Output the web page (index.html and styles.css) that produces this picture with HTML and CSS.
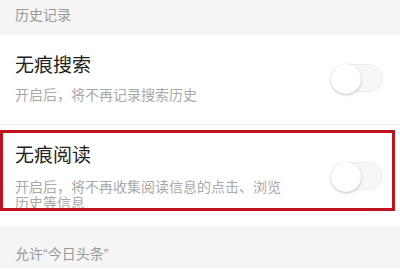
FILE: index.html
```html
<!DOCTYPE html>
<html lang="zh-CN">
<head>
    <meta charset="UTF-8">
    <meta name="viewport" content="width=device-width, initial-scale=1.0">
    <title>历史记录</title>
    <link rel="stylesheet" href="styles.css">
</head>
<body>
    <div class="section-head">历史记录</div>

    <div class="list">
        <div class="row">
            <div class="row-text">
                <div class="row-title">无痕搜索</div>
                <div class="row-desc">开启后，将不再记录搜索历史</div>
            </div>
            <div class="switch"><span class="knob"></span></div>
        </div>

        <div class="row row-last">
            <div class="row-text">
                <div class="row-title">无痕阅读</div>
                <div class="row-desc">开启后，将不再收集阅读信息的点击、浏览历史等信息</div>
            </div>
            <div class="switch"><span class="knob"></span></div>
            <div class="highlight"></div>
        </div>
    </div>

    <div class="section-foot">允许“今日头条”</div>
</body>
</html>
```

FILE: styles.css
```css
* {
    margin: 0;
    padding: 0;
    box-sizing: border-box;
}

body {
    width: 400px;
    background: #fff;
    font-family: "Noto Sans CJK SC", "Noto Sans", sans-serif;
    overflow: hidden;
}

.section-head {
    height: 35px;
    padding: 4px 15px 0;
    background: #f5f5f5;
    color: #9a9a9a;
    font-size: 14px;
    line-height: 20px;
}

.list {
    background: #fff;
}

.row {
    position: relative;
    display: flex;
    align-items: center;
    gap: 40px;
    padding: 16px 17px 20px 15px;
    border-bottom: 1px solid #f0f0f0;
}

.row-last {
    padding-top: 16px;
    padding-bottom: 16px;
    border-bottom: none;
}

.row-text {
    flex: 1;
}

.row-title {
    color: #222;
    font-size: 19px;
    line-height: 26px;
}

.row-desc {
    margin-top: 7px;
    color: #a9a9a9;
    font-size: 14px;
    line-height: 20px;
}

.row-last .row-desc {
    margin-top: 11px;
    line-height: 16px;
}

.switch {
    position: relative;
    flex: none;
    width: 52px;
    height: 28px;
    border: 1px solid #ededed;
    border-radius: 14px;
    background: #f7f7f7;
}

.knob {
    position: absolute;
    top: -1px;
    left: -1px;
    width: 30px;
    height: 30px;
    border-radius: 50%;
    background: #fff;
    box-shadow: 0 1px 3px rgba(0, 0, 0, 0.25);
}

.highlight {
    position: absolute;
    top: 5px;
    left: 0;
    right: 5px;
    bottom: 15px;
    border: 3px solid #c0121e;
}

.section-foot {
    height: 42px;
    padding: 18px 15px 0;
    background: #f5f5f5;
    color: #9a9a9a;
    font-family: "Liberation Sans", "Noto Sans CJK SC", sans-serif;
    font-size: 14px;
    line-height: 20px;
}
```
